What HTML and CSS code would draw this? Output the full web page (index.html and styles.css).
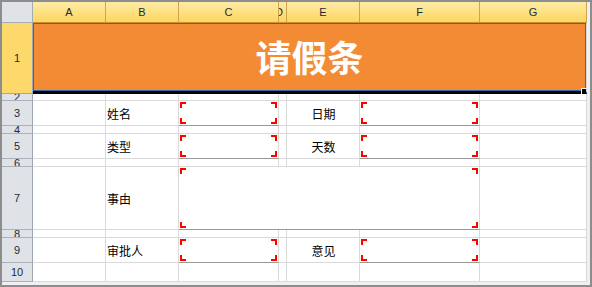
FILE: index.html
```html
<!DOCTYPE html>
<html lang="zh-CN">
<head>
    <meta charset="UTF-8">
    <title>请假条</title>
    <link rel="stylesheet" href="styles.css">
</head>
<body>
    <div class="frame">
        <div class="sheet">
            <!-- column headers -->
            <div class="corner"></div>
            <div class="colhead">A</div>
            <div class="colhead">B</div>
            <div class="colhead">C</div>
            <div class="colhead narrow">D</div>
            <div class="colhead">E</div>
            <div class="colhead">F</div>
            <div class="colhead">G</div>

            <!-- row 1: title -->
            <div class="rowhead selected">1</div>
            <div class="cell title">请假条<span class="handle"></span></div>

            <!-- row 2 -->
            <div class="rowhead">2</div>
            <div class="cell"></div><div class="cell"></div><div class="cell"></div><div class="cell"></div>
            <div class="cell"></div><div class="cell"></div><div class="cell"></div>

            <!-- row 3 -->
            <div class="rowhead">3</div>
            <div class="cell"></div>
            <div class="cell label">姓名</div>
            <div class="cell input"><div class="box"></div></div>
            <div class="cell"></div>
            <div class="cell label center">日期</div>
            <div class="cell input"><div class="box"></div></div>
            <div class="cell"></div>

            <!-- row 4 -->
            <div class="rowhead">4</div>
            <div class="cell"></div><div class="cell"></div><div class="cell"></div><div class="cell"></div>
            <div class="cell"></div><div class="cell"></div><div class="cell"></div>

            <!-- row 5 -->
            <div class="rowhead">5</div>
            <div class="cell"></div>
            <div class="cell label">类型</div>
            <div class="cell input"><div class="box"></div></div>
            <div class="cell"></div>
            <div class="cell label center">天数</div>
            <div class="cell input"><div class="box"></div></div>
            <div class="cell"></div>

            <!-- row 6 -->
            <div class="rowhead">6</div>
            <div class="cell"></div><div class="cell"></div><div class="cell"></div><div class="cell"></div>
            <div class="cell"></div><div class="cell"></div><div class="cell"></div>

            <!-- row 7: reason spans C to F -->
            <div class="rowhead">7</div>
            <div class="cell"></div>
            <div class="cell label">事由</div>
            <div class="cell input wide"><div class="box"></div></div>
            <div class="cell"></div>

            <!-- row 8 -->
            <div class="rowhead">8</div>
            <div class="cell"></div><div class="cell"></div><div class="cell"></div><div class="cell"></div>
            <div class="cell"></div><div class="cell"></div><div class="cell"></div>

            <!-- row 9 -->
            <div class="rowhead">9</div>
            <div class="cell"></div>
            <div class="cell label">审批人</div>
            <div class="cell input"><div class="box"></div></div>
            <div class="cell"></div>
            <div class="cell label center">意见</div>
            <div class="cell input"><div class="box"></div></div>
            <div class="cell"></div>

            <!-- row 10 -->
            <div class="rowhead">10</div>
            <div class="cell"></div><div class="cell"></div><div class="cell"></div><div class="cell"></div>
            <div class="cell"></div><div class="cell"></div><div class="cell"></div>
        </div>
    </div>
</body>
</html>
```

FILE: styles.css
```css
body {
    margin: 0;
    padding: 0;
    background: #fff;
    overflow: hidden;
}

/* window frame around the sheet */
.frame {
    width: 592px;
    height: 287px;
    box-sizing: border-box;
    border: 2px solid #8d8d8d;
    padding: 0 3px 3px 0;
    background: #eef0f3;
}

.sheet {
    display: grid;
    grid-template-columns: 31px 73px 73px 100px 8px 73px 120px 107px;
    grid-template-rows: 21px 71px 7px 25px 8px 25px 8px 63px 8px 25px 19px;
    background: #fff;
}

.sheet > div {
    box-sizing: border-box;
    overflow: hidden;
}

/* headers */
.corner {
    background: #dfe3e8;
    border-right: 1px solid #a4acb6;
    border-bottom: 1px solid #a4acb6;
}

.colhead {
    display: flex;
    align-items: center;
    justify-content: center;
    background: linear-gradient(to bottom, #fdeba6, #fdd65f);
    border-right: 1px solid #d3a24e;
    border-bottom: 1px solid #c5923c;
    font-family: "Liberation Sans", Arial, sans-serif;
    font-size: 11px;
    color: #1c2a38;
}

/* column D is too narrow for its letter */
.colhead.narrow {
    justify-content: flex-start;
    text-indent: -4px;
}

.rowhead {
    display: flex;
    align-items: center;
    justify-content: center;
    background: #dfe3e8;
    border-right: 1px solid #9ea6b0;
    border-bottom: 1px solid #aab1ba;
    font-family: "Liberation Sans", Arial, sans-serif;
    font-size: 11px;
    color: #1c2a38;
}

.rowhead.selected {
    background: #fdd96b;
    border-bottom-color: #d3a24e;
}

/* cells */
.cell {
    border-right: 1px solid #dadada;
    border-bottom: 1px solid #dadada;
}

.title {
    grid-column: span 7;
    position: relative;
    overflow: visible !important;
    display: flex;
    align-items: center;
    justify-content: center;
    background: #f38b35;
    border-bottom: 3px solid #000;
    box-shadow: inset 0 0 0 1px #2f6cae;
    font-family: "Noto Sans CJK SC", sans-serif;
    font-size: 36px;
    font-weight: bold;
    color: #fff;
    padding-bottom: 2px;
}

.handle {
    position: absolute;
    right: 0;
    bottom: -3px;
    width: 4px;
    height: 5px;
    background: #000;
    border-top: 1px solid #fff;
    border-left: 1px solid #fff;
}

.label {
    display: flex;
    align-items: center;
    padding-left: 1px;
    font-family: "Noto Sans CJK SC", sans-serif;
    font-size: 12px;
    color: #000;
}

.label.center {
    justify-content: center;
}

.input {
    display: flex;
    padding: 1px;
    border-bottom-color: #999;
}

.input.wide {
    grid-column: span 4;
}

/* red corner marks of an input box */
.box {
    flex: 1;
    background:
        linear-gradient(#f00, #f00) left top / 6px 2px no-repeat,
        linear-gradient(#f00, #f00) left top / 2px 6px no-repeat,
        linear-gradient(#f00, #f00) right top / 6px 2px no-repeat,
        linear-gradient(#f00, #f00) right top / 2px 6px no-repeat,
        linear-gradient(#f00, #f00) left bottom / 6px 2px no-repeat,
        linear-gradient(#f00, #f00) left bottom / 2px 6px no-repeat,
        linear-gradient(#f00, #f00) right bottom / 6px 2px no-repeat,
        linear-gradient(#f00, #f00) right bottom / 2px 6px no-repeat;
}
```
